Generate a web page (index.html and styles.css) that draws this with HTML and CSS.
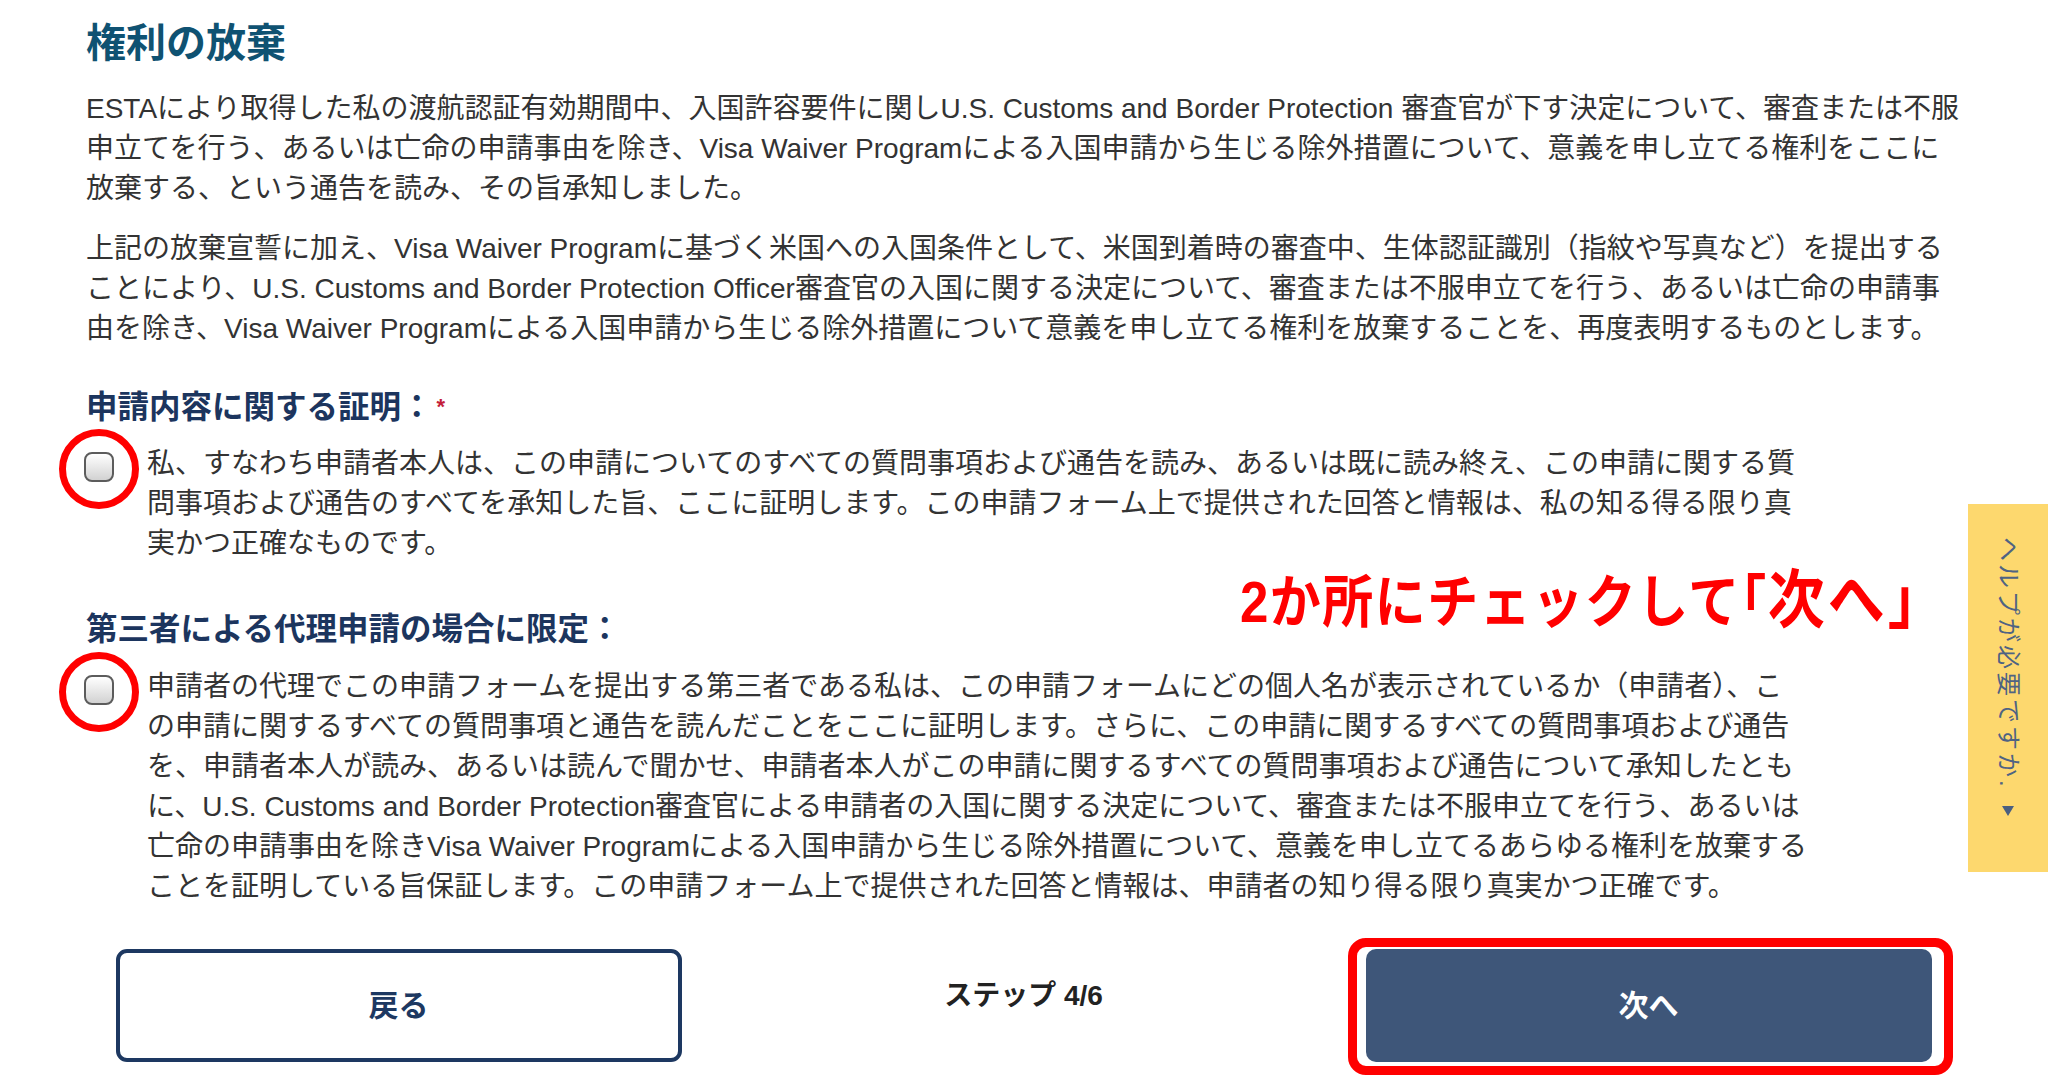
FILE: index.html
```html
<!DOCTYPE html>
<html lang="ja">
<head>
<meta charset="utf-8">
<title>権利の放棄</title>
<link rel="stylesheet" href="styles.css">
</head>
<body>
<main class="page">
  <h1 class="title">権利の放棄</h1>
  <p class="para">ESTAにより取得した私の渡航認証有効期間中、入国許容要件に関しU.S. Customs and Border Protection 審査官が下す決定について、審査または不服申立てを行う、あるいは亡命の申請事由を除き、Visa Waiver Programによる入国申請から生じる除外措置について、意義を申し立てる権利をここに放棄する、という通告を読み、その旨承知しました。</p>
  <p class="para">上記の放棄宣誓に加え、Visa Waiver Programに基づく米国への入国条件として、米国到着時の審査中、生体認証識別（指紋や写真など）を提出することにより、U.S. Customs and Border Protection Officer審査官の入国に関する決定について、審査または不服申立てを行う、あるいは亡命の申請事由を除き、Visa Waiver Programによる入国申請から生じる除外措置について意義を申し立てる権利を放棄することを、再度表明するものとします。</p>

  <h2 class="cert-heading">申請内容に関する証明：<span class="req">*</span></h2>
  <label class="check-row">
    <span class="check-wrap"><input type="checkbox" class="check"><span class="mark-circle"></span></span>
    <span class="check-text">私、すなわち申請者本人は、この申請についてのすべての質問事項および通告を読み、あるいは既に読み終え、この申請に関する質問事項および通告のすべてを承知した旨、ここに証明します。この申請フォーム上で提供された回答と情報は、私の知る得る限り真実かつ正確なものです。</span>
  </label>

  <h2 class="cert-heading second">第三者による代理申請の場合に限定：</h2>
  <label class="check-row second">
    <span class="check-wrap"><input type="checkbox" class="check"><span class="mark-circle"></span></span>
    <span class="check-text">申請者の代理でこの申請フォームを提出する第三者である私は、この申請フォームにどの個人名が表示されているか（申請者）、この申請に関するすべての質問事項と通告を読んだことをここに証明します。さらに、この申請に関するすべての質問事項および通告を、申請者本人が読み、あるいは読んで聞かせ、申請者本人がこの申請に関するすべての質問事項および通告について承知したともに、U.S. Customs and Border Protection審査官による申請者の入国に関する決定について、審査または不服申立てを行う、あるいは亡命の申請事由を除きVisa Waiver Programによる入国申請から生じる除外措置について、意義を申し立てるあらゆる権利を放棄することを証明している旨保証します。この申請フォーム上で提供された回答と情報は、申請者の知り得る限り真実かつ正確です。</span>
  </label>

  <div class="nav">
    <div class="nav-cell"><button class="btn btn-back" type="button">戻る</button></div>
    <div class="nav-cell"><span class="step">ステップ 4/6</span></div>
    <div class="nav-cell">
      <div class="btn-wrap"><button class="btn btn-next" type="button">次へ</button><span class="mark-rect"></span></div>
    </div>
  </div>

  <p class="annotation">2か所にチェックして<span class="bracket">「</span><span class="tail">次へ」</span></p>
</main>

<aside class="help-tab">
  <span class="help-text">ヘルプが必要ですか.</span>
  <span class="help-arrow"></span>
</aside>
</body>
</html>
```

FILE: styles.css
```css
* { box-sizing: border-box; }

html, body {
  margin: 0;
  padding: 0;
  background: #ffffff;
}

body {
  font-family: "Liberation Sans", "Noto Sans CJK JP", sans-serif;
  color: #333333;
  width: 2048px;
  height: 1090px;
  overflow: hidden;
  position: relative;
}

.page {
  position: relative;
  width: 1961px;
  padding: 19px 0 0 86px;
}

.title {
  margin: 0;
  font-size: 40px;
  line-height: 48px;
  font-weight: 700;
  color: #0f5272;
}

.para {
  margin: 22px 0 0;
  font-size: 28px;
  line-height: 40px;
}

.para + .para {
  margin-top: 20px;
}

.cert-heading {
  margin: 38px 0 0;
  font-size: 31.5px;
  line-height: 40px;
  font-weight: 700;
  color: #1c355e;
}

.cert-heading.second {
  margin-top: 45px;
}

.req {
  color: #c41e3a;
  font-size: 22px;
  vertical-align: top;
  margin-left: 4px;
}

.check-row {
  display: flex;
  align-items: flex-start;
  margin-top: 17px;
}

.check-row.second {
  margin-top: 18px;
}

.check-wrap {
  position: relative;
  flex: none;
  width: 30px;
  height: 30px;
  margin: 8px 33px 0 -2px;
}

.check {
  appearance: none;
  -webkit-appearance: none;
  display: block;
  margin: 0;
  width: 30px;
  height: 30px;
  border: 2px solid #5c5c5c;
  border-radius: 8px;
  background: linear-gradient(#ffffff, #d2d2d2);
}

.mark-circle {
  position: absolute;
  left: -25px;
  top: -23px;
  width: 80px;
  height: 80px;
  border: 7px solid #ff0000;
  border-radius: 50%;
  pointer-events: none;
}

.check-text {
  width: 1661px;
  font-size: 28px;
  line-height: 40px;
}

.nav {
  display: grid;
  grid-template-columns: repeat(3, 1fr);
  align-items: center;
  justify-items: center;
  width: 1875px;
  margin-top: 42px;
}

.btn {
  width: 566px;
  height: 113px;
  padding: 0 0 6px;
  font-family: inherit;
  font-size: 30px;
  font-weight: 700;
  border-radius: 11px;
  cursor: pointer;
}

.btn-back {
  background: #ffffff;
  color: #1d3861;
  border: 4px solid #1d3861;
}

.step {
  display: block;
  font-size: 28px;
  line-height: 40px;
  font-weight: 700;
  color: #222222;
  padding-bottom: 20px;
}

.btn-wrap {
  position: relative;
}

.btn-next {
  display: block;
  background: #3e5679;
  color: #ffffff;
  border: none;
  border-radius: 10px;
}

.mark-rect {
  position: absolute;
  left: -18px;
  right: -21px;
  top: -11px;
  bottom: -13px;
  border: 9px solid #ff0000;
  border-radius: 18px;
  pointer-events: none;
}

.annotation {
  position: absolute;
  left: 1240px;
  top: 572px;
  margin: 0;
  font-size: 51px;
  line-height: 1;
  font-weight: 700;
  letter-spacing: 1.5px;
  color: #ff0000;
  white-space: nowrap;
  transform: scaleY(1.12);
  transform-origin: left top;
}

.bracket {
  font-feature-settings: "halt";
}

.tail {
  font-size: 57px;
  line-height: 51px;
  letter-spacing: 3px;
}

.help-tab {
  position: absolute;
  right: 0;
  top: 504px;
  width: 80px;
  height: 368px;
  background: #fdd86e;
  display: flex;
  flex-direction: column;
  align-items: center;
  padding-top: 33px;
}

.help-text {
  writing-mode: vertical-rl;
  text-orientation: sideways;
  font-size: 24px;
  line-height: 1;
  letter-spacing: 3px;
  color: #4f6383;
}

.help-arrow {
  width: 0;
  height: 0;
  border-left: 6px solid transparent;
  border-right: 6px solid transparent;
  border-top: 10px solid #4a5f80;
  margin-top: 16px;
}
```
